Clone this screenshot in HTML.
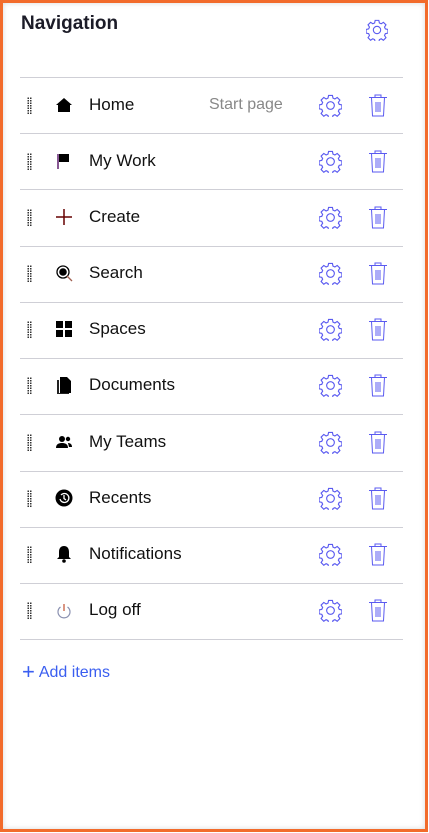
<!DOCTYPE html>
<html><head><style>
*{margin:0;padding:0;box-sizing:border-box}
body{width:429px;height:833px;background:#fff;font-family:"Liberation Sans",sans-serif;position:relative;overflow:hidden}
.frame{position:absolute;left:0;top:0;width:428px;height:832px;border:3px solid #f26b2b;box-shadow:inset 0 0 6px rgba(0,0,0,.15)}
.title{position:absolute;left:21px;top:13px;font-size:19px;font-weight:bold;color:#1c1c28}
.line{position:absolute;left:20px;width:383px;height:1px;background:#cfcfd6}
.row{position:absolute;left:0;width:429px;height:56px}
.dots{position:absolute;left:27px;top:-8px;width:5px;height:17px;background-image:radial-gradient(circle,#333 0.8px,transparent 1px);background-size:2.5px 2.5px}
.ic{position:absolute;left:55px;top:-9px;width:18px;height:18px}
.lbl{position:absolute;left:89px;top:-10px;font-size:17px;color:#111}
.sp{position:absolute;left:209px;top:-9px;font-size:16px;color:#888}
.g{position:absolute;left:319px;top:-11px}
.t{position:absolute;left:368px;top:-12px}
.add{position:absolute;left:22px;top:657px;color:#3a5ef0;font-size:16px}
</style></head><body>
<div class="frame"></div>
<div class="title">Navigation</div>
<svg style="position:absolute;left:366px;top:19px" width="22" height="22" viewBox="0 0 24 24"><use href="#gear"/></svg>
<div class="line" style="top:77px"></div>
<div class="line" style="top:133px"></div>
<div class="line" style="top:189px"></div>
<div class="line" style="top:246px"></div>
<div class="line" style="top:302px"></div>
<div class="line" style="top:358px"></div>
<div class="line" style="top:414px"></div>
<div class="line" style="top:471px"></div>
<div class="line" style="top:527px"></div>
<div class="line" style="top:583px"></div>
<div class="line" style="top:639px"></div>

<svg width="0" height="0" style="position:absolute"><defs>
<symbol id="gear" viewBox="0 0 24 24"><g fill="none" stroke="#5a5af0" stroke-width="1.2"><path d="M10 1.5h4l.6 2.8 2 .9 2.4-1.6 2.8 2.8-1.6 2.4.9 2 2.8.6v4l-2.8.6-.9 2 1.6 2.4-2.8 2.8-2.4-1.6-2 .9-.6 2.8h-4l-.6-2.8-2-.9-2.4 1.6-2.8-2.8 1.6-2.4-.9-2-2.8-.6v-4l2.8-.6.9-2-1.6-2.4 2.8-2.8 2.4 1.6 2-.9z"/><circle cx="12" cy="12" r="4"/></g></symbol>
<symbol id="trash" viewBox="0 0 20 24"><g fill="none" stroke="#5a5af0" stroke-width="1"><path d="M1 4.5h18M7 4.5V2h6v2.5M3.5 4.5l1 18.5h11l1-18.5M8 9v10M10 9v10M12 9v10"/></g></symbol>
</defs></svg>

<div class="row" style="top:105px"><div class="dots"></div>
<svg class="ic" viewBox="0 0 18 18"><path d="M9 2 1 9h2v7h12V9h2z" fill="#000"/></svg>
<div class="lbl">Home</div><div class="sp">Start page</div>
<svg class="g" width="23" height="23" viewBox="0 0 24 24"><use href="#gear"/></svg><svg class="t" width="20" height="24" viewBox="0 0 20 24"><use href="#trash"/></svg></div>

<div class="row" style="top:161px"><div class="dots"></div>
<svg class="ic" viewBox="0 0 18 18"><path d="M3 2v15" stroke="#602070" stroke-width="1.5"/><rect x="4" y="2" width="10" height="8" fill="#000"/></svg>
<div class="lbl">My Work</div>
<svg class="g" width="23" height="23" viewBox="0 0 24 24"><use href="#gear"/></svg><svg class="t" width="20" height="24" viewBox="0 0 20 24"><use href="#trash"/></svg></div>

<div class="row" style="top:217px"><div class="dots"></div>
<svg class="ic" viewBox="0 0 18 18"><path d="M9 1v16M1 9h16" stroke="#600" stroke-width="1.5"/></svg>
<div class="lbl">Create</div>
<svg class="g" width="23" height="23" viewBox="0 0 24 24"><use href="#gear"/></svg><svg class="t" width="20" height="24" viewBox="0 0 20 24"><use href="#trash"/></svg></div>

<div class="row" style="top:273px"><div class="dots"></div>
<svg class="ic" viewBox="0 0 18 18"><circle cx="8" cy="8" r="6" fill="none" stroke="#000" stroke-width="1.3"/><circle cx="8" cy="8" r="3.8" fill="#000"/><path d="M12 12l5 5" stroke="#a06050" stroke-width="1.3"/></svg>
<div class="lbl">Search</div>
<svg class="g" width="23" height="23" viewBox="0 0 24 24"><use href="#gear"/></svg><svg class="t" width="20" height="24" viewBox="0 0 20 24"><use href="#trash"/></svg></div>

<div class="row" style="top:329px"><div class="dots"></div>
<svg class="ic" viewBox="0 0 18 18"><rect x="1" y="1" width="7" height="7" fill="#000"/><rect x="10" y="1" width="7" height="7" fill="#000"/><rect x="1" y="10" width="7" height="7" fill="#000"/><rect x="10" y="10" width="7" height="7" fill="#000"/></svg>
<div class="lbl">Spaces</div>
<svg class="g" width="23" height="23" viewBox="0 0 24 24"><use href="#gear"/></svg><svg class="t" width="20" height="24" viewBox="0 0 20 24"><use href="#trash"/></svg></div>

<div class="row" style="top:385px"><div class="dots"></div>
<svg class="ic" viewBox="0 0 18 18"><path d="M2 4h2v13h10v1H2z" fill="#222"/><path d="M5 1h7l4 4v12H5z" fill="#000"/></svg>
<div class="lbl">Documents</div>
<svg class="g" width="23" height="23" viewBox="0 0 24 24"><use href="#gear"/></svg><svg class="t" width="20" height="24" viewBox="0 0 20 24"><use href="#trash"/></svg></div>

<div class="row" style="top:442px"><div class="dots"></div>
<svg class="ic" viewBox="0 0 18 18"><circle cx="7" cy="6" r="3" fill="#000"/><path d="M1 15c0-4 3-5 6-5s6 1 6 5z" fill="#000"/><circle cx="13" cy="6" r="2.2" fill="#000"/><path d="M13 10c2 0 4 1 4 4h-3z" fill="#000"/></svg>
<div class="lbl">My Teams</div>
<svg class="g" width="23" height="23" viewBox="0 0 24 24"><use href="#gear"/></svg><svg class="t" width="20" height="24" viewBox="0 0 20 24"><use href="#trash"/></svg></div>

<div class="row" style="top:498px"><div class="dots"></div>
<svg class="ic" viewBox="0 0 18 18"><circle cx="9" cy="9" r="8.5" fill="#000"/><path d="M5 10a4.5 4.5 0 1 0 1-4M9 6v3.5l2 1.5" stroke="#fff" stroke-width="1.3" fill="none"/></svg>
<div class="lbl">Recents</div>
<svg class="g" width="23" height="23" viewBox="0 0 24 24"><use href="#gear"/></svg><svg class="t" width="20" height="24" viewBox="0 0 20 24"><use href="#trash"/></svg></div>

<div class="row" style="top:554px"><div class="dots"></div>
<svg class="ic" viewBox="0 0 18 18"><path d="M9 1c-3 0-5 2-5 6v5l-2 2h14l-2-2V7c0-4-2-6-5-6z" fill="#000"/><circle cx="9" cy="16" r="1.8" fill="#000"/></svg>
<div class="lbl">Notifications</div>
<svg class="g" width="23" height="23" viewBox="0 0 24 24"><use href="#gear"/></svg><svg class="t" width="20" height="24" viewBox="0 0 20 24"><use href="#trash"/></svg></div>

<div class="row" style="top:610px"><div class="dots"></div>
<svg class="ic" viewBox="0 0 18 18"><path d="M5.5 6a6 6 0 1 0 7 0" stroke="#8a90b0" stroke-width="1.2" fill="none"/><path d="M9 3v7" stroke="#c05030" stroke-width="1.2"/></svg>
<div class="lbl">Log off</div>
<svg class="g" width="23" height="23" viewBox="0 0 24 24"><use href="#gear"/></svg><svg class="t" width="20" height="24" viewBox="0 0 20 24"><use href="#trash"/></svg></div>

<div class="add"><span style="font-size:22px;position:relative;top:2px;margin-right:4px">+</span>Add items</div>
</body></html>
